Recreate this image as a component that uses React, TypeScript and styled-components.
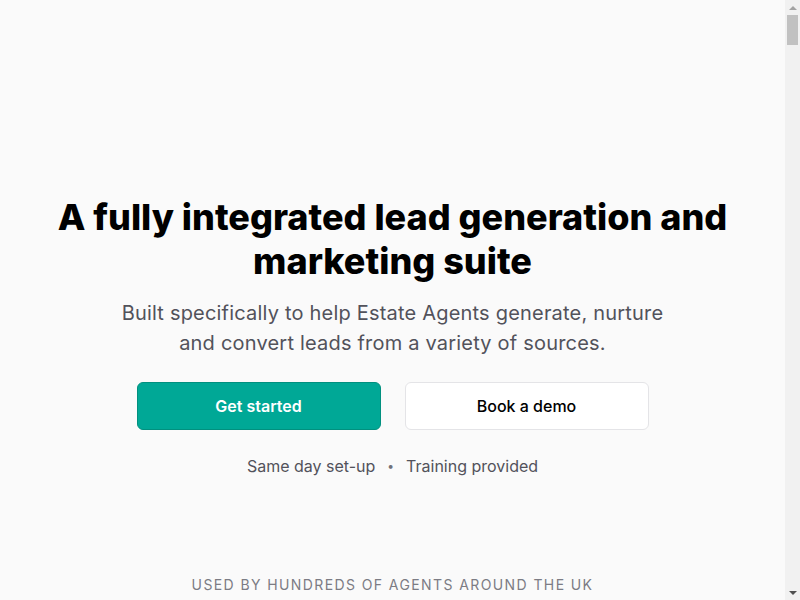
import React from 'react';
import styled, { createGlobalStyle } from 'styled-components';

const GlobalStyle = createGlobalStyle`
  html, body {
    margin: 0;
    padding: 0;
    background: #fafafa;
    font-family: Inter, "Noto Sans", sans-serif;
    color: #09090b;
    -webkit-font-smoothing: antialiased;
  }
  * { box-sizing: border-box; }
`;

const Frame = styled.div`
  display: flex;
  height: 100vh;
  overflow: hidden;
  background: #fafafa;
`;

const Page = styled.main`
  flex: 1;
  display: flex;
  flex-direction: column;
  min-width: 0;
`;

/* classic scrollbar as seen along the right edge */
const ScrollRail = styled.div`
  width: 15px;
  flex-shrink: 0;
  display: flex;
  flex-direction: column;
  background: #f1f1f1;
`;

const ScrollArrow = styled.div<{ $down?: boolean }>`
  height: 15px;
  display: flex;
  align-items: center;
  justify-content: center;

  &::before {
    content: '';
    width: 0;
    height: 0;
    border-left: 4px solid transparent;
    border-right: 4px solid transparent;
    ${({ $down }) =>
      $down ? 'border-top: 4px solid #505050;' : 'border-bottom: 4px solid #a3a3a3;'}
  }
`;

const ScrollTrack = styled.div`
  flex: 1;
  padding: 0 2px;
`;

const ScrollThumb = styled.div`
  height: 30px;
  background: #c1c1c1;
`;

const Hero = styled.section`
  display: flex;
  flex-direction: column;
  align-items: center;
  text-align: center;
  padding: 195px 24px 0;
`;

const Title = styled.h1`
  margin: 0;
  max-width: 720px;
  font-size: 36px;
  line-height: 44px;
  font-weight: 800;
  color: #000;
`;

const Lead = styled.p`
  margin: 15px 0 0;
  max-width: 560px;
  font-size: 20px;
  line-height: 30px;
  letter-spacing: 0.01em;
  color: #52525b;
`;

const Actions = styled.div`
  display: flex;
  gap: 24px;
  margin-top: 24px;
`;

const Button = styled.a<{ $primary?: boolean }>`
  display: flex;
  align-items: center;
  justify-content: center;
  width: 244px;
  height: 48px;
  border-radius: 6px;
  font-size: 16px;
  text-decoration: none;
  cursor: pointer;
  font-weight: ${({ $primary }) => ($primary ? 600 : 500)};
  color: ${({ $primary }) => ($primary ? '#fff' : '#000')};
  background: ${({ $primary }) => ($primary ? '#00a896' : '#fff')};
  border: 1px solid ${({ $primary }) => ($primary ? '#01907f' : '#e4e4e7')};
`;

const Perks = styled.p`
  display: flex;
  align-items: center;
  gap: 12px;
  margin: 24px 0 0;
  font-size: 16px;
  line-height: 24px;
  color: #52525b;
`;

const Dot = styled.span`
  font-size: 12px;
  color: #71717a;
`;

const Logos = styled.section`
  display: flex;
  flex-direction: column;
  align-items: center;
  padding: 97px 24px 0;
`;

const Eyebrow = styled.h2`
  margin: 0;
  font-size: 14px;
  line-height: 20px;
  font-weight: 400;
  letter-spacing: 0.1em;
  text-transform: uppercase;
  color: #7c7c84;
`;

export default function App() {
  return (
    <>
      <GlobalStyle />
      <Frame>
        <Page>
          <Hero>
            <Title>A fully integrated lead generation and marketing suite</Title>
            <Lead>
              Built specifically to help Estate Agents generate, nurture and convert leads from a variety of sources.
            </Lead>
            <Actions>
              <Button $primary>Get started</Button>
              <Button>Book a demo</Button>
            </Actions>
            <Perks>
              <span>Same day set-up</span>
              <Dot>•</Dot>
              <span>Training provided</span>
            </Perks>
          </Hero>
          <Logos>
            <Eyebrow>Used by hundreds of agents around the UK</Eyebrow>
          </Logos>
        </Page>
        <ScrollRail aria-hidden>
          <ScrollArrow />
          <ScrollTrack>
            <ScrollThumb />
          </ScrollTrack>
          <ScrollArrow $down />
        </ScrollRail>
      </Frame>
    </>
  );
}
